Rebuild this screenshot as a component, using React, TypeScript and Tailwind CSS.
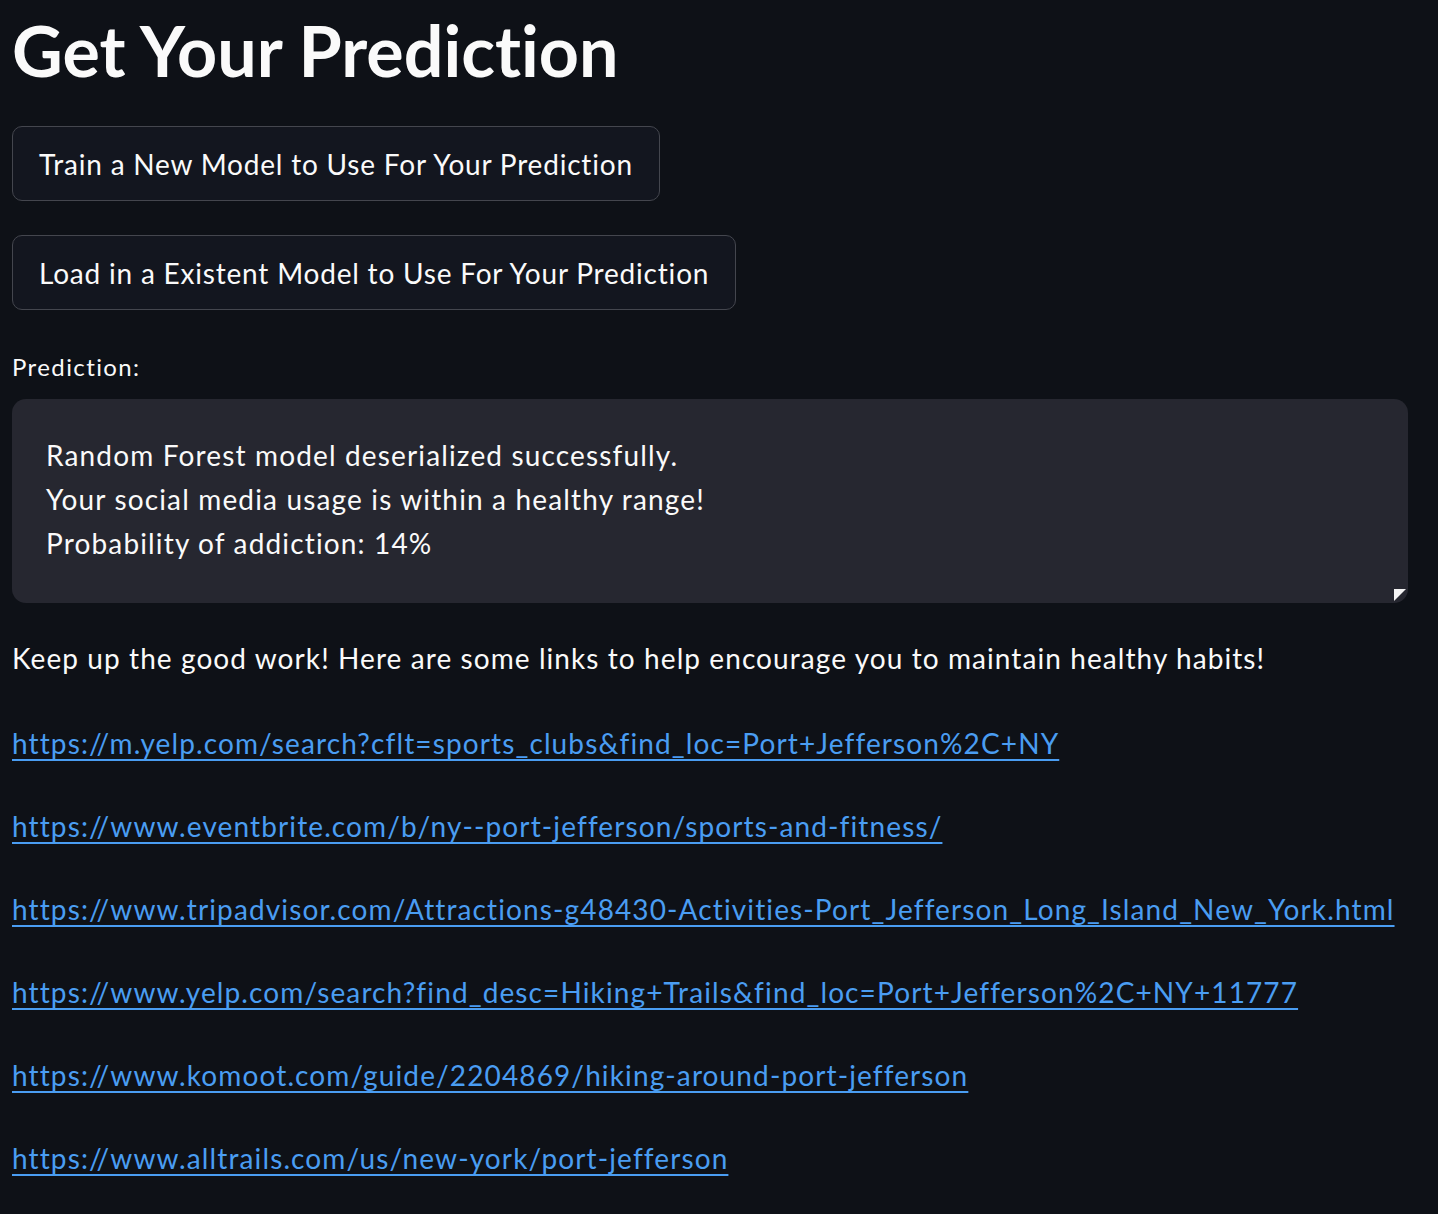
import React from 'react';

const links = [
  'https://m.yelp.com/search?cflt=sports_clubs&find_loc=Port+Jefferson%2C+NY',
  'https://www.eventbrite.com/b/ny--port-jefferson/sports-and-fitness/',
  'https://www.tripadvisor.com/Attractions-g48430-Activities-Port_Jefferson_Long_Island_New_York.html',
  'https://www.yelp.com/search?find_desc=Hiking+Trails&find_loc=Port+Jefferson%2C+NY+11777',
  'https://www.komoot.com/guide/2204869/hiking-around-port-jefferson',
  'https://www.alltrails.com/us/new-york/port-jefferson',
];

function ResizeHandle() {
  return (
    <svg
      className="absolute right-[2px] bottom-[2px]"
      width="12"
      height="12"
      viewBox="0 0 12 12"
    >
      <polygon points="0,0 12,0 0,12" fill="#f4f4f4" />
    </svg>
  );
}

export default function App() {
  return (
    <div
      className="min-h-screen bg-[#0e1117] text-[#fafafa] px-[12px] pr-[30px] [font-variant-ligatures:none]"
      style={{ fontFamily: 'Lato, "Noto Sans", sans-serif' }}
    >
      <h1 className="pt-[8px] text-[70px] font-bold leading-[84px]">
        Get Your Prediction
      </h1>

      <div className="flex flex-col items-start gap-[34px] mt-[34px]">
        <button className="h-[75px] px-[26px] rounded-[10px] border border-[#44464e] bg-[#13161f] text-[28px] tracking-[0.8px] text-[#fafafa]">
          Train a New Model to Use For Your Prediction
        </button>
        <button className="h-[75px] px-[26px] rounded-[10px] border border-[#44464e] bg-[#13161f] text-[28px] tracking-[0.8px] text-[#fafafa]">
          Load in a Existent Model to Use For Your Prediction
        </button>
      </div>

      <p className="mt-[42px] text-[24px] leading-[29px] tracking-[1.4px]">Prediction:</p>

      <div className="relative mt-[18px] h-[204px] rounded-[14px] bg-[#262730] px-[34px] pt-[34px] text-[28px] leading-[44px] tracking-[1.15px]">
        <p>Random Forest model deserialized successfully.</p>
        <p>Your social media usage is within a healthy range!</p>
        <p>Probability of addiction: 14%</p>
        <ResizeHandle />
      </div>

      <p className="mt-[33px] text-[28px] leading-[44px] tracking-[1.08px]">
        Keep up the good work! Here are some links to help encourage you to maintain healthy habits!
      </p>

      <div className="flex flex-col gap-[39px] mt-[41px] pb-[40px]">
        {links.map((href) => (
          <p key={href} className="text-[28px] leading-[44px] tracking-[1.12px]">
            <a
              href={href}
              className="text-[#4a9df2] underline decoration-2 underline-offset-[5px]"
            >
              {href}
            </a>
          </p>
        ))}
      </div>
    </div>
  );
}
